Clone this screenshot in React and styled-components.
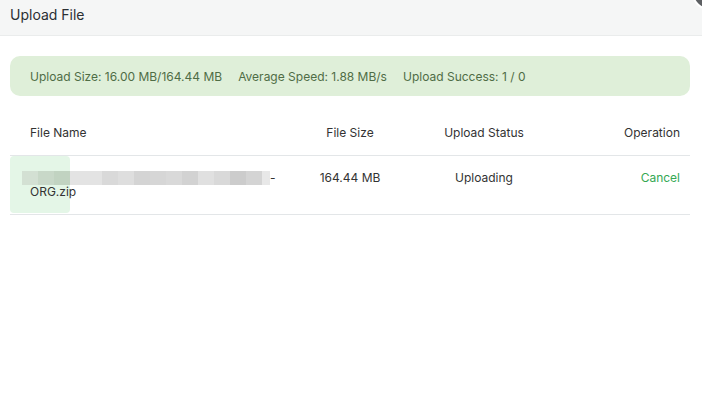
import React from 'react'
import styled, { createGlobalStyle } from 'styled-components'

const GlobalStyle = createGlobalStyle`
    html, body {
        margin: 0;
        padding: 0;
        background: #fff;
        overflow: hidden;
    }
    body {
        font-family: Inter, "Noto Sans", "Liberation Sans", sans-serif;
        color: #333;
    }
`

const Modal = styled.div`
    position: relative;
    width: 702px;
    height: 409px;
    background: #fff;
`

const Header = styled.div`
    box-sizing: border-box;
    height: 36px;
    padding: 6px 10px 0;
    background: #f5f6f6;
    border-bottom: 1px solid #eaecec;
    font-size: 14px;
    line-height: 18px;
    color: #2b2f33;
`

// dark close button, mostly outside the window
const CloseButton = styled.div`
    position: absolute;
    top: -24px;
    right: -24px;
    width: 30px;
    height: 30px;
    border-radius: 50%;
    background: #5d6063;
    border: 2px solid #fff;
`

const Body = styled.div`
    padding: 20px 12px 0 10px;
`

const StatsBar = styled.div`
    display: flex;
    align-items: center;
    gap: 16px;
    height: 40px;
    padding: 0 20px;
    border-radius: 10px;
    background: #dfefd9;
    color: #4f6d46;
    font-size: 12px;
`

const Table = styled.div`
    margin-top: 14px;
    font-size: 12px;
`

const Row = styled.div`
    position: relative;
    display: grid;
    grid-template-columns: 290px 100px 168px 1fr;
    align-items: start;
    border-bottom: 1px solid #e3e6e8;
`

const HeadRow = styled(Row)`
    height: 45px;
    align-items: center;
`

const Cell = styled.div`
    position: relative;
    padding: ${props => (props.$head ? '0 10px' : '15px 10px')};
    line-height: 14px;
    text-align: ${props => props.$align || 'center'};
    color: ${props => props.$color || '#333'};
    ${props => props.$first && 'padding-left: 20px;'}
`

const Progress = styled.div`
    position: absolute;
    left: 0;
    top: 0;
    bottom: 1px;
    border-radius: 4px;
    background: #e4f6e7;
`

const NameLine = styled.div`
    display: flex;
    align-items: center;
    height: 14px;
    margin-left: -8px;
`

const Mosaic = styled.div`
    display: flex;
    height: 14px;
`

const Block = styled.span`
    width: ${props => props.$w || 16}px;
    height: 14px;
    background: ${props => props.$shade};
`

const shades = [
    '#d3e0d3', '#c8d8c8', '#c1d3c1', '#e3e3e3', '#e3e3e3', '#d9d9d9',
    '#dedede', '#d4d4d4', '#d6d6d6', '#d9d9d9', '#d2d2d2', '#e0e0e0',
    '#d9d9d9', '#cccccc', '#d4d4d4',
]

const file = {
    name: 'ORG.zip',
    size: '164.44 MB',
    status: 'Uploading',
    progress: 8.8,
}

export default function App() {
    return (
        <Modal>
            <GlobalStyle />
            <Header>Upload File</Header>
            <CloseButton />
            <Body>
                <StatsBar>
                    <span>Upload Size: 16.00 MB/164.44 MB</span>
                    <span>Average Speed: 1.88 MB/s</span>
                    <span>Upload Success: 1 / 0</span>
                </StatsBar>
                <Table>
                    <HeadRow>
                        <Cell $head $first $align="left">File Name</Cell>
                        <Cell $head>File Size</Cell>
                        <Cell $head>Upload Status</Cell>
                        <Cell $head $align="right">Operation</Cell>
                    </HeadRow>
                    <Row>
                        <Progress style={{ width: `${file.progress}%` }} />
                        <Cell $first $align="left">
                            <NameLine>
                                <Mosaic>
                                    {shades.map((s, i) => <Block key={i} $shade={s} />)}
                                    <Block $w={8} $shade="#e8e8e8" />
                                </Mosaic>
                                <span>-</span>
                            </NameLine>
                            <div>{file.name}</div>
                        </Cell>
                        <Cell>{file.size}</Cell>
                        <Cell>{file.status}</Cell>
                        <Cell $align="right" $color="#34a853">Cancel</Cell>
                    </Row>
                </Table>
            </Body>
        </Modal>
    )
}
